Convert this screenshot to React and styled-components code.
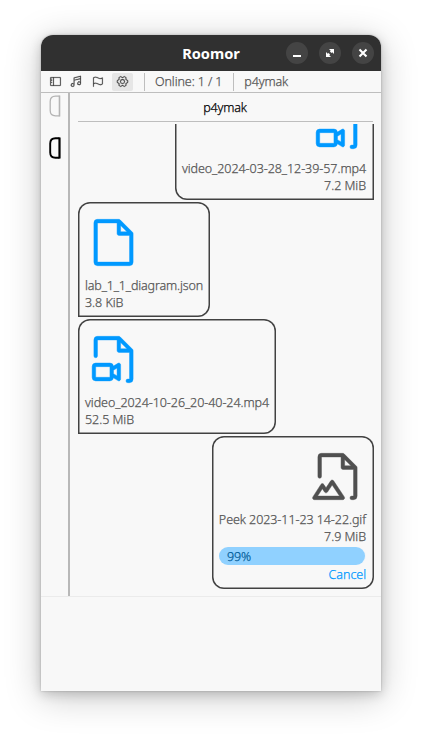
import React from "react";
import styled, { createGlobalStyle } from "styled-components";
import {
  PiSidebar,
  PiMusicNotes,
  PiFlag,
  PiGearSix,
  PiFile,
  PiFileVideo,
  PiFileImage,
} from "react-icons/pi";

const GlobalStyle = createGlobalStyle`
  * { box-sizing: border-box; }
  body {
    margin: 0;
    background: #fff;
    font-family: "Noto Sans", "Open Sans", sans-serif;
    font-size: 12.5px;
    overflow: hidden;
  }
`;

const Desktop = styled.main`
  width: 422px;
  height: 738px;
  padding: 35px 41px 47px;
  overflow: hidden;
`;

const Window = styled.section`
  display: flex;
  flex-direction: column;
  width: 340px;
  height: 656px;
  background: #f8f8f8;
  border-radius: 12px 12px 0 0;
  overflow: hidden;
  box-shadow: 0 0 2px rgba(0, 0, 0, 0.25), 0 3px 12px rgba(0, 0, 0, 0.18),
    0 6px 36px rgba(0, 0, 0, 0.22);
`;

const TitleBar = styled.header`
  display: grid;
  grid-template-columns: 1fr auto 1fr;
  align-items: center;
  flex: none;
  height: 36px;
  padding: 0 7px;
  background: #303030;
  color: #fff;
`;

const Title = styled.h1`
  grid-column: 2;
  margin: 0;
  font-size: 14.6px;
  line-height: 20px;
  font-weight: 700;
`;

const WindowButtons = styled.div`
  display: flex;
  justify-content: flex-end;
  gap: 11px;
`;

const WindowButton = styled.button`
  width: 22px;
  height: 22px;
  padding: 0;
  border: 0;
  border-radius: 50%;
  background: #444;
  color: #fff;
  svg { display: block; }
`;

const Toolbar = styled.nav`
  display: flex;
  align-items: center;
  flex: none;
  height: 22px;
  padding-left: 4px;
  border-bottom: 1px solid #bebebe;
`;

const ToolButton = styled.button`
  display: grid;
  place-items: center;
  width: 21px;
  height: 18px;
  margin-right: ${(p) => p.$gap || 0}px;
  padding: 0;
  border: 0;
  border-radius: 2px;
  background: ${(p) => (p.$active ? "#e6e6e6" : "transparent")};
  color: #444;
  svg { stroke: currentColor; stroke-width: 4px; }
`;

const Divider = styled.span`
  width: 1px;
  height: 18px;
  margin: 0 10px 0 ${(p) => p.$before}px;
  background: #bebebe;
`;

const Label = styled.span`
  color: ${(p) => p.$color || "#555"};
  font-weight: 300;
  line-height: 17px;
  letter-spacing: ${(p) => p.$track || 0}px;
  -webkit-text-stroke: 0.25px currentColor;
  white-space: nowrap;
`;

const Workspace = styled.div`
  display: flex;
  flex: none;
  height: 504px;
  border-bottom: 1px solid #ebebeb;
`;

const Sidebar = styled.aside`
  display: flex;
  flex-direction: column;
  align-items: center;
  gap: 20px;
  width: 29px;
  padding-top: 2px;
  border-right: 2px solid #b8b8b8;
  svg { display: block; }
`;

const Conversation = styled.section`
  display: flex;
  flex-direction: column;
  width: 311px;
  padding: 0 7px;
`;

const PeerName = styled.h2`
  display: flex;
  flex: none;
  align-items: center;
  justify-content: center;
  height: 29px;
  margin: 0 1px;
  padding-right: 1px;
  border-bottom: 1px solid #bebebe;
  font-size: inherit;
`;

const Messages = styled.div`
  display: flex;
  flex-direction: column;
  flex: 1;
  justify-content: flex-end;
  gap: 2px;
  min-height: 0;
  margin-top: 2px;
  padding: 0 0.5px 7px;
  overflow: hidden;
`;

const Bubble = styled.article`
  display: flex;
  flex-direction: column;
  flex: none;
  align-self: ${(p) => (p.$mine ? "flex-end" : "flex-start")};
  align-items: ${(p) => (p.$mine ? "flex-end" : "flex-start")};
  width: ${(p) => p.$width}px;
  height: ${(p) => p.$height || 115}px;
  padding: 12px 7.5px 0;
  border-radius: ${(p) => p.$corners};
  box-shadow: inset 0 0 0 1.5px #424242;
`;

const FileArt = styled.div`
  width: 57px;
  height: 57px;
  margin-bottom: 6px;
  color: ${(p) => p.$color};
  svg { display: block; stroke: currentColor; stroke-width: 2px; }
`;

const Progress = styled.div`
  width: 147px;
  height: 18px;
  margin: 2px 0 1px;
  border-radius: 9px;
  background: #eef5fa;
`;

const ProgressFill = styled.div`
  display: flex;
  align-items: center;
  height: 18px;
  padding-left: 8px;
  border-radius: 9px;
  background: #90d1ff;
`;

const TOOLS = [
  { name: "Sidebar", Icon: PiSidebar },
  { name: "Sounds", Icon: PiMusicNotes },
  { name: "Flag", Icon: PiFlag, gap: 4 },
  { name: "Settings", Icon: PiGearSix, active: true },
];

const FILES = [
  { name: "video_2024-03-28_12-39-57.mp4", track: -0.06, size: "7.2 MiB", Icon: PiFileVideo, mine: true, width: 199, corners: "12px 12px 0 12px" },
  { name: "lab_1_1_diagram.json", track: -0.14, size: "3.8 KiB", Icon: PiFile, width: 132.5, corners: "12px 12px 12px 0" },
  { name: "video_2024-10-26_20-40-24.mp4", track: -0.06, size: "52.5 MiB", Icon: PiFileVideo, width: 198.5, corners: "12px 12px 12px 0" },
  { name: "Peek 2023-11-23 14-22.gif", track: -0.07, size: "7.9 MiB", Icon: PiFileImage, mine: true, width: 162, height: 153, corners: "12px", progress: 99 },
];

function PeerMark({ color, stroke }) {
  return (
    <svg width="14" height="22" viewBox="0 0 14 22" fill="none">
      <path d="M11.5 1.2H7.5Q2.2 1.2 2.2 6.5V15.5Q2.2 20.8 7.5 20.8H11.5" stroke={color} strokeWidth={stroke} />
      <path d="M11.5 .5V21.5" stroke={color} strokeWidth={stroke + 0.3} />
    </svg>
  );
}

function FileMessage({ file }) {
  const { Icon } = file;
  return (
    <Bubble $mine={file.mine} $width={file.width} $height={file.height} $corners={file.corners}>
      <FileArt $color={file.progress ? "#505050" : "#0099ff"}>
        <Icon size={57} />
      </FileArt>
      <Label $track={file.track}>{file.name}</Label>
      <Label $track={-0.05}>{file.size}</Label>
      {file.progress && (
        <>
          <Progress>
            <ProgressFill style={{ width: `${file.progress}%` }}>
              <Label $color="#005c99" $track={-0.1}>{file.progress}%</Label>
            </ProgressFill>
          </Progress>
          <Label $color="#0099ff" $track={-0.05}>Cancel</Label>
        </>
      )}
    </Bubble>
  );
}

export default function App() {
  return (
    <Desktop>
      <GlobalStyle />
      <Window>
        <TitleBar>
          <Title>Roomor</Title>
          <WindowButtons>
            <WindowButton aria-label="Minimize">
              <svg width="22" height="22"><path d="M7 14h8" stroke="currentColor" strokeWidth="2" /></svg>
            </WindowButton>
            <WindowButton aria-label="Maximize">
              <svg width="22" height="22" fill="currentColor"><path d="M10 7h5v5l-1.7-1.7-.8.8-1.6-1.6.8-.8zM7 10l1.7 1.7.8-.8 1.6 1.6-.8.8L12 15H7z" /></svg>
            </WindowButton>
            <WindowButton aria-label="Close">
              <svg width="22" height="22"><path d="M7.5 7.5l7 7m0-7l-7 7" stroke="currentColor" strokeWidth="2.1" /></svg>
            </WindowButton>
          </WindowButtons>
        </TitleBar>
        <Toolbar>
          {TOOLS.map(({ name, Icon, active, gap }) => (
            <ToolButton key={name} aria-label={name} $active={active} $gap={gap}>
              <Icon size={13} />
            </ToolButton>
          ))}
          <Divider $before={11} />
          <Label $track={-0.1}>Online: 1 / 1</Label>
          <Divider $before={11} />
          <Label $track={-0.15}>p4ymak</Label>
        </Toolbar>
        <Workspace>
          <Sidebar>
            <PeerMark color="#b4b4b4" stroke={1.3} />
            <PeerMark color="#000" stroke={1.9} />
          </Sidebar>
          <Conversation>
            <PeerName><Label $color="#000" $track={-0.15}>p4ymak</Label></PeerName>
            <Messages>
              {FILES.map((file) => <FileMessage key={file.name} file={file} />)}
            </Messages>
          </Conversation>
        </Workspace>
      </Window>
    </Desktop>
  );
}
